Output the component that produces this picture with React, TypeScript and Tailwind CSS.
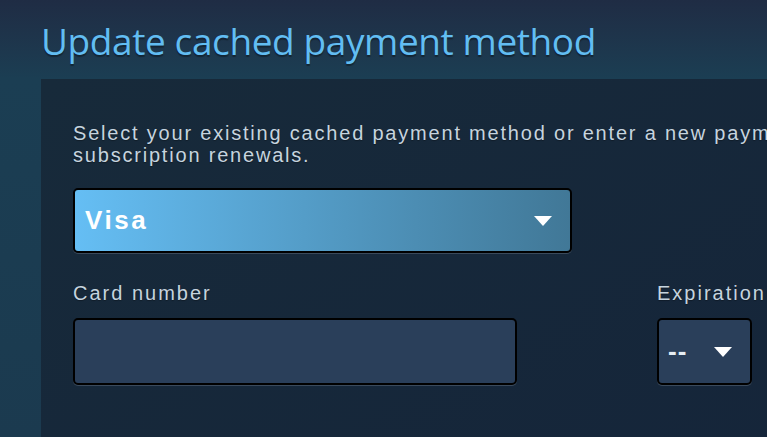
import React from 'react'

const Caret = () => (
  <svg width="18" height="10" viewBox="0 0 18 10" className="shrink-0">
    <path d="M0 0h18L9 10z" fill="#fff" />
  </svg>
)

export default function App() {
  return (
    <div className="w-[767px] h-[437px] overflow-hidden bg-gradient-to-b from-[#1f2c44] via-[#1b3e53] via-[18%] to-[#1b3a4f] font-['Liberation_Sans',Arial,sans-serif]">
      <h1 className="pl-[41px] pt-[19px] h-[79px] text-[37px] leading-[44px] text-[#62bdf2] font-['Open_Sans',sans-serif] tracking-[-0.4px] [text-shadow:0_2px_1px_rgba(0,0,0,0.35)]">
        Update cached payment method
      </h1>
      <div className="ml-[41px] h-full bg-gradient-to-br from-[#172a3a] to-[#15253a] pl-[32px] pt-[43px]">
        <p className="text-[20px] leading-[22px] tracking-[1.8px] text-[#c6d4df] whitespace-nowrap [text-shadow:0_1px_1px_rgba(0,0,0,0.3)]">
          Select your existing cached payment method or enter a new payment method for
          <br />
          subscription renewals.
        </p>
        <div className="mt-[22px] w-[499px] h-[65px] rounded-[5px] border-2 border-black bg-gradient-to-r from-[#65bef4] to-[#417897] flex items-center justify-between pl-[10px] pr-[18px] shadow-[0_1px_0_#3a4a5c]">
          <span className="text-[26px] text-white font-bold tracking-[2.6px]">Visa</span>
          <Caret />
        </div>
        <div className="mt-[29px] flex">
          <div className="w-[584px]">
            <div className="text-[20px] leading-[22px] tracking-[2px] text-[#c6d4df] [text-shadow:0_1px_1px_rgba(0,0,0,0.3)]">Card number</div>
            <div className="mt-[14px] w-[444px] h-[67px] rounded-[5px] border-2 border-black bg-[#2a3f5a] shadow-[0_1px_0_#3a4a5c]" />
          </div>
          <div>
            <div className="text-[20px] leading-[22px] tracking-[2px] text-[#c6d4df] whitespace-nowrap [text-shadow:0_1px_1px_rgba(0,0,0,0.3)]">Expiration</div>
            <div className="mt-[14px] w-[95px] h-[67px] rounded-[5px] border-2 border-black bg-[#2a3f5a] flex items-center justify-between pl-[9px] pr-[18px] shadow-[0_1px_0_#3a4a5c]">
              <span className="text-[26px] text-[#e6eef4] font-bold tracking-[1px]">--</span>
              <Caret />
            </div>
          </div>
        </div>
      </div>
    </div>
  )
}
